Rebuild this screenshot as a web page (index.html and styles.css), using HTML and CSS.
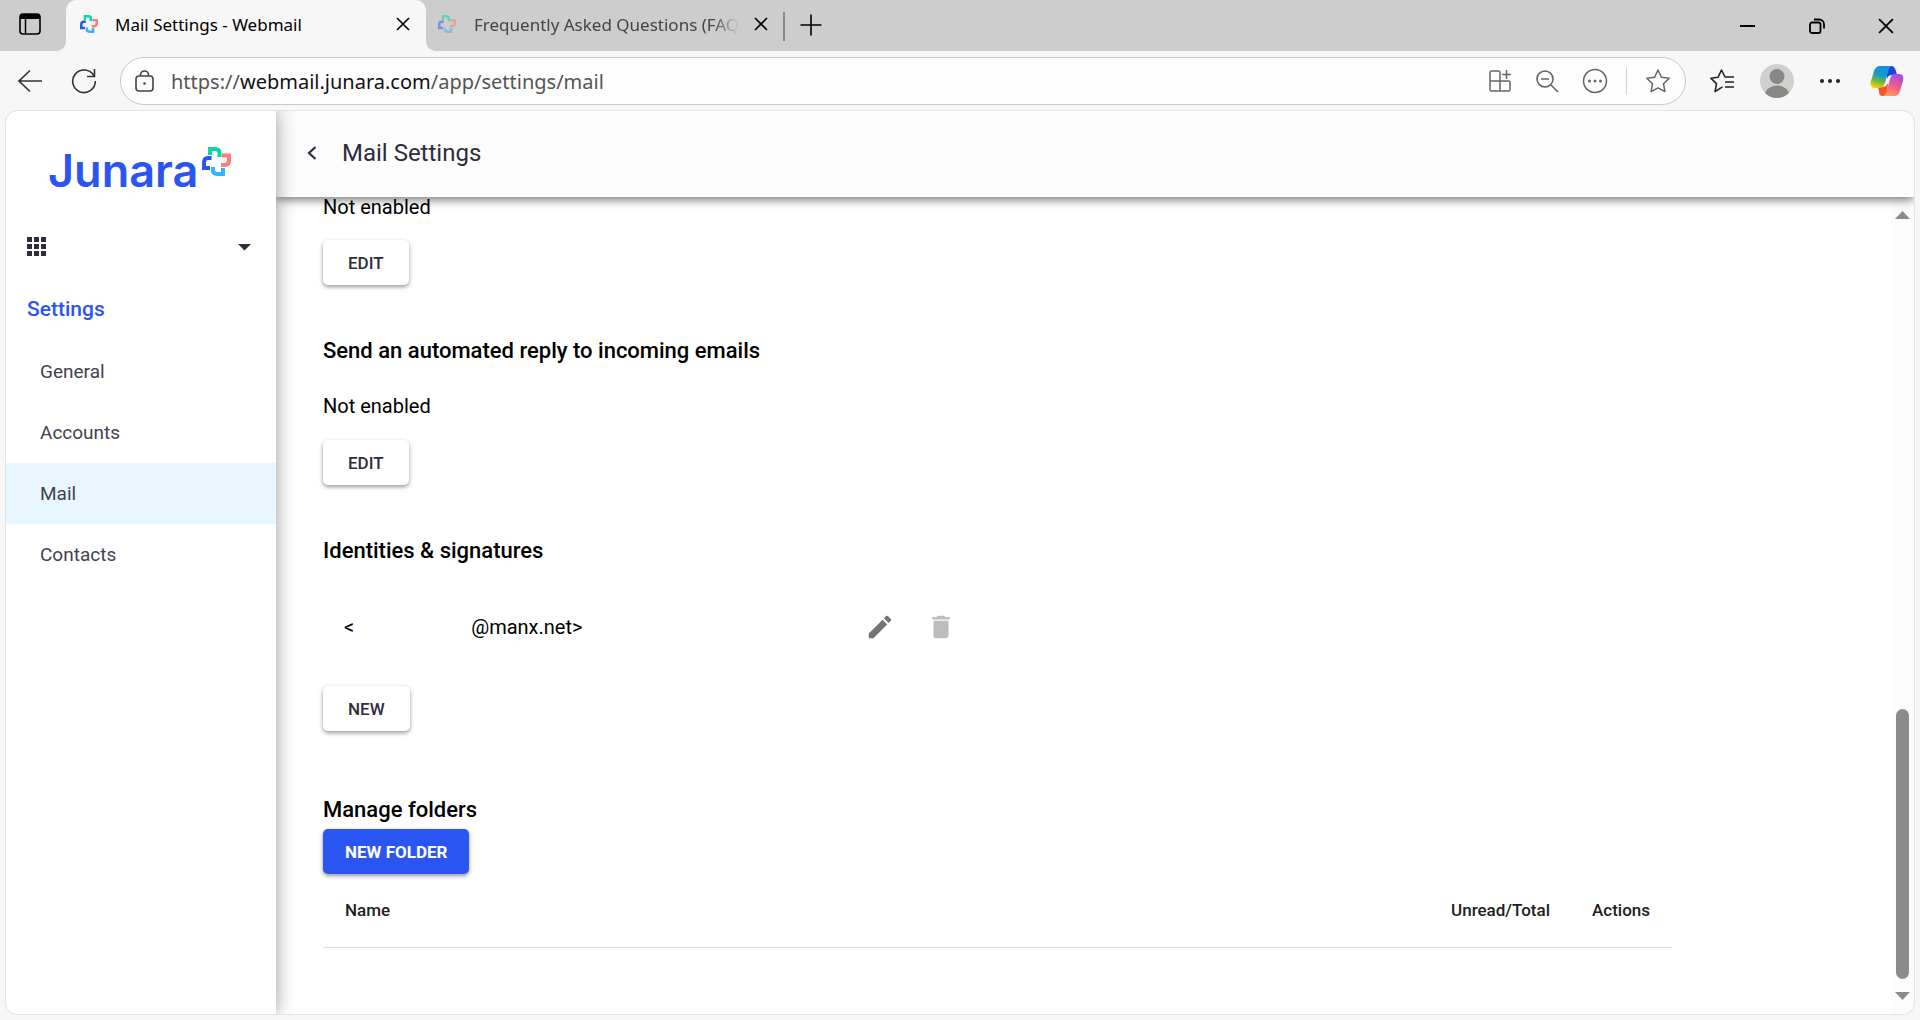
FILE: index.html
```html
<!DOCTYPE html>
<html lang="en">
<head>
  <meta charset="utf-8">
  <title>Mail Settings - Webmail</title>
  <link rel="stylesheet" href="styles.css">
</head>
<body>
  <svg class="sprite" aria-hidden="true">
    <symbol id="cross" viewBox="0 0 29 29">
      <g fill="none" stroke-width="4">
        <path stroke="#06d6a0" d="M8 8V2h5c3 0 4.500 1.500 4.500 4v4"/>
        <path stroke="#ff7b7b" d="M20 8.500h7v4.500c0 3.500-1.500 5-4 5h-4"/>
        <path stroke="#2fb4ff" d="M21 21v6h-5c-3.500 0-5-1.500-5-4v-3"/>
        <path stroke="#2b55f3" d="M8 21H2v-5c0-3.500 1.500-5 4-5h3.500"/>
      </g>
    </symbol>
    <symbol id="x" viewBox="0 0 14 14">
      <path fill="none" stroke="currentColor" stroke-width="1.6" d="M1 1l12 12M13 1L1 13"/>
    </symbol>
    <symbol id="star" viewBox="0 0 26 26">
      <path fill="none" stroke="currentColor" stroke-width="1.5" stroke-linejoin="round" d="M13 2l3.4 7.2 7.8 1-5.700 5.500 1.400 7.900L13 19.800l-6.900 3.800 1.400-7.900L1.800 10.200l7.800-1z"/>
    </symbol>
  </svg>

  <div class="tab-bar">
    <button class="icon-btn workspaces" aria-label="Tab actions">
      <svg width="22" height="22" viewBox="0 0 22 22"><rect x="1" y="1" width="20" height="20" rx="3" fill="none" stroke="#000" stroke-width="1.600"/><path d="M1 6V4a3 3 0 0 1 3-3h14a3 3 0 0 1 3 3v2z"/><path d="M6.500 6v15" stroke="#000" stroke-width="1.500"/></svg>
    </button>
    <div class="tab active">
      <svg class="favicon"><use href="#cross"/></svg>
      <span class="tab-title">Mail Settings - Webmail</span>
      <button class="icon-btn" aria-label="Close tab"><svg width="14" height="14"><use href="#x"/></svg></button>
    </div>
    <div class="tab inactive">
      <svg class="favicon"><use href="#cross"/></svg>
      <span class="tab-title">Frequently Asked Questions (FAQ)</span>
      <button class="icon-btn" aria-label="Close tab"><svg width="14" height="14"><use href="#x"/></svg></button>
    </div>
    <button class="icon-btn new-tab" aria-label="New tab">
      <svg width="22" height="22" viewBox="0 0 22 22"><path d="M11 0.500v21M0.500 11h21" stroke="#000" stroke-width="1.600"/></svg>
    </button>
    <div class="window-controls">
      <button class="icon-btn" aria-label="Minimize"><svg width="16" height="16"><path d="M0 8h15" stroke="#000" stroke-width="2"/></svg></button>
      <button class="icon-btn" aria-label="Restore"><svg width="16" height="16" fill="none" stroke="#000" stroke-width="1.800"><rect x="1" y="4.500" width="10.500" height="10.500" rx="2"/><path d="M5 1.500h5a5 5 0 0 1 5 5v4"/></svg></button>
      <button class="icon-btn" aria-label="Close"><svg width="16" height="16"><use href="#x"/></svg></button>
    </div>
  </div>

  <div class="toolbar">
    <button class="icon-btn" aria-label="Back">
      <svg width="24" height="24" viewBox="0 0 24 24" fill="none" stroke="#333" stroke-width="1.600"><path d="M24 12H1M12 1.500L1 12l11 10.500"/></svg>
    </button>
    <button class="icon-btn" aria-label="Refresh">
      <svg width="26" height="26" viewBox="0 0 26 26" fill="none" stroke="#333" stroke-width="1.600"><path d="M23 8A11.300 11.300 0 1 0 24.300 13M23.500 1v7.500H16"/></svg>
    </button>
    <div class="address-bar">
      <svg width="20" height="22" viewBox="0 0 20 22" fill="none" stroke="#444" stroke-width="1.600"><rect x="1" y="6" width="17" height="15" rx="3"/><path d="M5.500 6V5a4 4 0 0 1 8 0v1"/><circle cx="9.500" cy="13.500" r="1.300" fill="#444" stroke="none"/></svg>
      <div class="url"><span>https://</span><b>webmail.junara.com</b><span>/app/settings/mail</span></div>
      <div class="address-icons">
        <button class="icon-btn" aria-label="Apps">
          <svg width="24" height="24" viewBox="0 0 24 24" fill="none" stroke="currentColor" stroke-width="1.500"><path d="M12 12H2V3.500A1.500 1.500 0 0 1 3.500 2h7A1.500 1.500 0 0 1 12 3.500zM2 12v8.500A1.500 1.500 0 0 0 3.500 22h17a1.500 1.500 0 0 0 1.500-1.500v-7a1.500 1.500 0 0 0-1.500-1.500H12v10M18.500 1v9M14 5.500h9"/></svg>
        </button>
        <button class="icon-btn" aria-label="Zoom out">
          <svg width="24" height="24" viewBox="0 0 24 24" fill="none" stroke="currentColor" stroke-width="1.600"><circle cx="10" cy="10" r="8"/><path d="M6 10h8M16 16l7 7"/></svg>
        </button>
        <button class="icon-btn" aria-label="Site options">
          <svg width="26" height="26" viewBox="0 0 26 26"><circle cx="13" cy="13" r="11.500" fill="none" stroke="currentColor" stroke-width="1.500"/><g fill="currentColor"><circle cx="7.500" cy="13" r="1.500"/><circle cx="13" cy="13" r="1.500"/><circle cx="18.500" cy="13" r="1.500"/></g></svg>
        </button>
        <span class="divider"></span>
        <button class="icon-btn" aria-label="Add to favorites"><svg width="26" height="26"><use href="#star"/></svg></button>
      </div>
    </div>
    <div class="toolbar-icons">
      <button class="icon-btn" aria-label="Favorites">
        <svg width="26" height="26" viewBox="0 0 26 26" fill="none" stroke="#222" stroke-width="1.600" stroke-linejoin="round"><path d="M13.500 18.800l-7.400 4.800 1.400-7.900L1.800 10.200l7.300-1L12.500 2l3.600 7H23M16 9h9M16 14h9M16 19h9"/></svg>
      </button>
      <button class="icon-btn" aria-label="Profile">
        <svg width="34" height="34" viewBox="0 0 34 34"><clipPath id="face"><circle cx="17" cy="17" r="17"/></clipPath><g clip-path="url(#face)"><path fill="#d2d0ce" d="M0 0h34v34H0z"/><circle cx="17" cy="12.500" r="7.500" fill="#8a8886"/><ellipse cx="17" cy="31" rx="12" ry="9.500" fill="#8a8886"/></g></svg>
      </button>
      <button class="icon-btn" aria-label="Menu">
        <svg width="22" height="22" viewBox="0 0 22 22" fill="#222"><circle cx="3" cy="11" r="2"/><circle cx="11" cy="11" r="2"/><circle cx="19" cy="11" r="2"/></svg>
      </button>
      <button class="icon-btn copilot" aria-label="Copilot">
        <svg width="34" height="32" viewBox="0 0 34 32">
          <defs>
            <linearGradient id="cool" x1="0.600" y1="0" x2="0.300" y2="1"><stop offset="0" stop-color="#1a8cec"/><stop offset="0.400" stop-color="#1499c9"/><stop offset="0.700" stop-color="#6fb83f"/><stop offset="1" stop-color="#ffd000"/></linearGradient>
            <linearGradient id="warm" x1="0.700" y1="0" x2="0.300" y2="1"><stop offset="0" stop-color="#a14be8"/><stop offset="0.500" stop-color="#f2588f"/><stop offset="1" stop-color="#ff9a5a"/></linearGradient>
          </defs>
          <path fill="#1b48d8" d="M17 1h4c3 0 4 2 5 5l1 4h-5c-3 0-4 1-5 4z"/>
          <path fill="#f3562f" d="M17 31h-4c-3 0-4-2-4-5l-1-4h4c3 0 4-1 6-4z"/>
          <path fill="url(#cool)" d="M10 1h12c-2 1-3 2-4 6l-3 11c-1 3-3 5-6 5H5c-4 0-5-3-4-7l3-10c1-3 3-5 6-5z"/>
          <path fill="url(#warm)" d="M24 9h5c4 0 5 3 4 7l-3 10c-1 3-3 5-6 5H13c2-1 3-2 4-6l3-11c1-3 2-5 4-5z"/>
        </svg>
      </button>
    </div>
  </div>

  <div class="page">
    <aside class="sidebar">
      <a class="logo" href="#"><span>Junara</span><svg width="29" height="29"><use href="#cross"/></svg></a>
      <button class="app-switcher" aria-label="Switch app">
        <svg width="20" height="20" fill="#2d2d3d"><path d="M0 0h5v5H0zM7 0h5v5H7zM14 0h5v5h-5zM0 7h5v5H0zM7 7h5v5H7zM14 7h5v5h-5zM0 14h5v5H0zM7 14h5v5H7zM14 14h5v5h-5z"/></svg>
        <svg width="13" height="7" fill="#2d2d3d"><path d="M0 0h13L6.500 6.500z"/></svg>
      </button>
      <h2>Settings</h2>
      <nav>
        <a href="#">General</a>
        <a href="#">Accounts</a>
        <a href="#" class="selected">Mail</a>
        <a href="#">Contacts</a>
      </nav>
    </aside>

    <main class="main">
      <header class="page-header">
        <button class="icon-btn" aria-label="Back to settings"><svg width="10" height="14" viewBox="0 0 10 14" fill="none" stroke="#2d2d3d" stroke-width="2.200"><path d="M8.500 1L2 7l6.500 6"/></svg></button>
        <h1>Mail Settings</h1>
      </header>
      <div class="scroll-area">
        <div class="content">
          <section>
            <p>Not enabled</p>
            <button class="btn">EDIT</button>
          </section>
          <section>
            <h3>Send an automated reply to incoming emails</h3>
            <p>Not enabled</p>
            <button class="btn">EDIT</button>
          </section>
          <section class="identities">
            <h3>Identities &amp; signatures</h3>
            <div class="identity">
              <span class="bracket">&lt;</span>
              <span class="domain">@manx.net&gt;</span>
              <button class="icon-btn" aria-label="Edit identity"><svg width="30" height="30" viewBox="0 0 24 24" fill="#757575"><path d="M3 17.250V21h3.750L17.810 9.940l-3.750-3.750L3 17.250zM20.710 7.040a1 1 0 0 0 0-1.410l-2.340-2.340a1 1 0 0 0-1.410 0l-1.830 1.830 3.750 3.750 1.830-1.830z"/></svg></button>
              <button class="icon-btn" aria-label="Delete identity" disabled><svg width="30" height="30" viewBox="0 0 24 24" fill="#bdbdbd"><path d="M6 19c0 1.100.9 2 2 2h8c1.100 0 2-.9 2-2V7H6v12zM19 4h-3.500l-1-1h-5l-1 1H5v2h14V4z"/></svg></button>
            </div>
            <button class="btn">NEW</button>
          </section>
          <section>
            <h3>Manage folders</h3>
            <button class="btn primary">NEW FOLDER</button>
            <table class="folders">
              <thead>
                <tr><th class="name">Name</th><th>Unread/Total</th><th>Actions</th></tr>
              </thead>
            </table>
          </section>
        </div>
        <div class="scrollbar" aria-hidden="true">
          <svg width="15" height="8"><path d="M0 8h15L7.500 0z"/></svg>
          <div class="track"><div class="thumb"></div></div>
          <svg width="15" height="8"><path d="M0 0h15L7.500 8z"/></svg>
        </div>
      </div>
    </main>
  </div>
</body>
</html>
```
FILE: styles.css
```css
* { box-sizing: border-box; }
body { margin: 0; height: 100vh; display: flex; flex-direction: column; background: #f7f7f7; font-family: Roboto, sans-serif; color: #000; overflow: hidden; }
h1, h2, h3, p { margin: 0; }
a { color: inherit; text-decoration: none; }
svg { display: block; flex: none; }
.sprite { position: absolute; width: 0; height: 0; }
.icon-btn { display: flex; align-items: center; justify-content: center; flex: none; padding: 0; border: none; background: none; color: inherit; cursor: pointer; }

/* browser tabs */
.tab-bar { display: flex; height: 51px; background: #cdcdcd; font-family: "Noto Sans", "Open Sans", sans-serif; font-size: 17px; }
.workspaces { width: 60px; margin-right: 6px; padding-bottom: 3px; }
.tab { display: flex; align-items: center; height: 51px; padding-bottom: 3px; }
.tab .icon-btn { width: 24px; height: 24px; }
.tab-title { flex: 1; white-space: nowrap; overflow: hidden; }
.favicon { width: 18px; height: 18px; }
.active { position: relative; width: 360px; padding-left: 14px; padding-right: 11px; background: #f7f7f7; border-radius: 10px 10px 0 0; }
.active .favicon, .inactive .favicon { margin-right: 17px; }
.active::before, .active::after { content: ""; position: absolute; bottom: 0; width: 10px; height: 10px; }
.active::before { left: -10px; background: radial-gradient(circle at 0 0, #cdcdcd 10px, #f7f7f7 10px); }
.active::after { right: -10px; background: radial-gradient(circle at 100% 0, #cdcdcd 10px, #f7f7f7 10px); }
.inactive { width: 347px; padding-left: 12px; color: #444; }
.inactive .favicon { opacity: 0.5; margin-right: 18px; }
.inactive .tab-title { mask-image: linear-gradient(to right, #000 90%, transparent); }
.inactive .icon-btn { margin: 0 0 0 10px; color: #000; }
.new-tab { margin: 12px 0 10px 10px; padding: 0 0 4px 15px; border-left: 2px solid #888; }
.window-controls { display: flex; margin-left: auto; }
.window-controls .icon-btn { width: 69px; }

/* address row */
.toolbar { display: flex; align-items: center; height: 60px; padding: 0 16px 0 18px; }
.toolbar > .icon-btn { margin-right: 29px; }
.toolbar > .icon-btn + .icon-btn { margin-right: 23px; }
.address-bar { display: flex; flex: 1; align-items: center; height: 48px; padding: 0 14px; border: 1px solid #c8c8c8; border-radius: 24px; background: #fdfdfd; }
.url { flex: 1; margin-left: 16px; font-family: "Noto Sans", "Open Sans", sans-serif; font-size: 20px; color: #555; }
.url b { font-weight: 400; color: #111; }
.address-icons { display: flex; align-items: center; gap: 23px; color: #666; }
.divider { width: 1px; height: 28px; margin: 0 -5px; background: #d0d0d0; }
.toolbar-icons { display: flex; align-items: center; gap: 25px; margin-left: 23px; }
.copilot { margin-left: 4px; }

/* web page */
.page { display: flex; flex: 1; min-height: 0; margin: 0 6px 6px; border-radius: 12px; background: #fff; box-shadow: 0 0 0 1px #e3e3e3; overflow: hidden; }
.sidebar { width: 270px; background: #fff; box-shadow: 0 0 18px rgba(0, 0, 0, 0.4); z-index: 2; }
.logo { display: flex; align-items: flex-start; padding: 36px 0 0 42px; color: #2b55f3; }
.logo span { font-family: Inter, sans-serif; font-size: 45px; font-weight: 600; line-height: 48px; }
.logo svg { margin-left: 4px; }
.app-switcher { display: flex; align-items: center; justify-content: space-between; width: 100%; height: 60px; margin-top: 22px; padding: 0 25px 0 21px; border: none; background: none; cursor: pointer; }
.sidebar h2 { padding: 20px 21px; font-size: 21px; font-weight: 500; line-height: 24px; color: #2b55f3; }
.sidebar nav a { display: flex; align-items: center; height: 61px; padding-left: 34px; font-size: 19px; color: #42424f; }
.sidebar nav .selected { background: #e8f6ff; }

.main { display: flex; flex: 1; flex-direction: column; min-width: 0; }
.page-header { display: flex; align-items: center; flex: none; height: 86px; padding: 0 0 2px 31px; background: #fcfcfc; box-shadow: 0 2px 10px rgba(0, 0, 0, 0.6); z-index: 1; }
.page-header h1 { margin-left: 25px; font-size: 24px; font-weight: 400; line-height: 32px; color: #2d2d3d; }
.scroll-area { display: flex; flex: 1; min-height: 0; }
.content { flex: 1; max-height: 100%; padding: 0 219px 0 47px; overflow: hidden; }
.content section { margin-bottom: 52px; }
.content .identities { margin-bottom: 65px; }
.content p { padding-bottom: 22px; font-size: 20px; line-height: 24px; }
.content section:first-child p { padding-bottom: 23px; line-height: 20px; }
.content h3 { font-size: 22px; font-weight: 500; line-height: 28px; }
.content h3 + p { padding-top: 29px; }
.btn { display: block; height: 45px; padding: 0 25px; border: none; border-radius: 5px; background: #fff; box-shadow: 0 2px 4px rgba(0, 0, 0, 0.4); font-family: inherit; font-size: 17px; font-weight: 500; color: #2d2d3d; cursor: pointer; }
.primary { margin-top: 5px; padding: 0 22px; background: #2b55f3; font-weight: 700; color: #fff; }
.identity { display: flex; align-items: center; gap: 31px; max-width: 633px; height: 72px; margin: 26px 0 23px; padding-left: 21px; font-size: 20px; }
.domain { flex: 1; margin-left: 86px; }
.folders { width: 100%; border-collapse: collapse; }
.folders th { height: 73px; padding: 0 0 0 42px; border-bottom: 1px solid #dedede; text-align: left; font-size: 17px; font-weight: 500; color: #212121; }
.folders .name { width: 100%; padding-left: 22px; }
.folders th:last-child { padding-right: 22px; }

.scrollbar { display: flex; flex-direction: column; align-items: center; width: 23px; padding: 14px 1px 14px 0; background: #fcfcfc; fill: #8b8b8b; }
.track { display: flex; flex: 1; align-items: flex-end; padding-bottom: 13px; }
.thumb { width: 13px; height: 270px; border-radius: 7px; background: #8b8b8b; }
```
